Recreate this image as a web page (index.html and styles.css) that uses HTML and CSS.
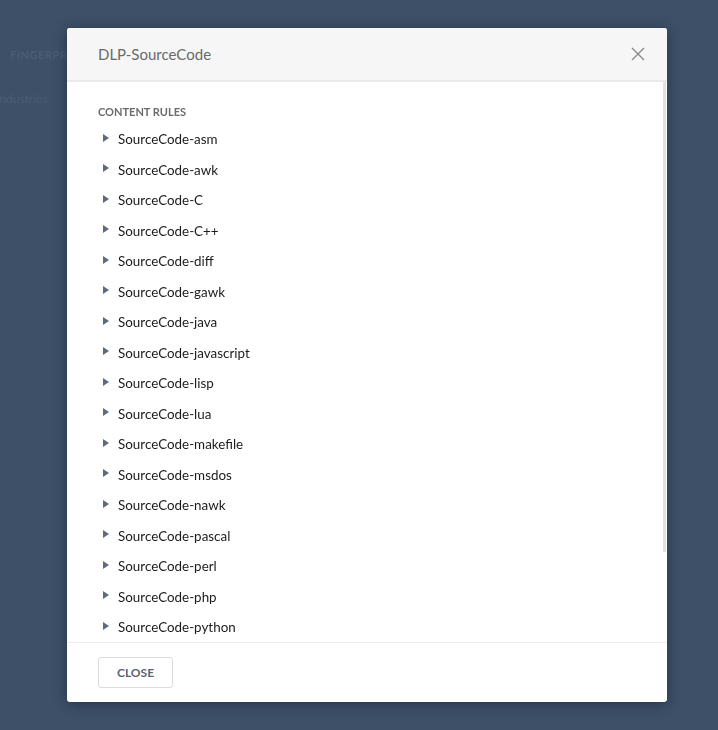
FILE: index.html
```html
<!DOCTYPE html>
<html lang="en">
<head>
    <meta charset="UTF-8">
    <title>DLP-SourceCode</title>
    <link rel="stylesheet" href="styles.css">
</head>
<body>
    <div class="page">
        <div class="page-tabs">FINGERPRINTS</div>
        <div class="page-row">Industries</div>
    </div>

    <div class="modal">
        <div class="modal-header">
            <h2>DLP-SourceCode</h2>
            <button class="close-x" aria-label="Close">
                <svg width="14" height="14" viewBox="0 0 14 14"><path d="M1 1L13 13M13 1L1 13" stroke="#8a8a8a" stroke-width="1.4" fill="none"/></svg>
            </button>
        </div>
        <div class="modal-body">
            <div class="section-label">Content Rules</div>
            <ul class="rules">
                <li>SourceCode-asm</li>
                <li>SourceCode-awk</li>
                <li>SourceCode-C</li>
                <li>SourceCode-C++</li>
                <li>SourceCode-diff</li>
                <li>SourceCode-gawk</li>
                <li>SourceCode-java</li>
                <li>SourceCode-javascript</li>
                <li>SourceCode-lisp</li>
                <li>SourceCode-lua</li>
                <li>SourceCode-makefile</li>
                <li>SourceCode-msdos</li>
                <li>SourceCode-nawk</li>
                <li>SourceCode-pascal</li>
                <li>SourceCode-perl</li>
                <li>SourceCode-php</li>
                <li>SourceCode-python</li>
            </ul>
        </div>
        <div class="scroll-thumb"></div>
        <div class="modal-footer">
            <button class="btn-close">Close</button>
        </div>
    </div>
</body>
</html>
```
FILE: styles.css
```css
body {
    margin: 0;
    background: #3d5068;
    font-family: Lato, "Open Sans", sans-serif;
    height: 730px;
    overflow: hidden;
}

.page {
    padding: 48px 0 0 10px;
    color: #4a5d74;
    font-size: 11px;
}
.page-tabs {
    font-weight: bold;
    letter-spacing: 0.5px;
}
.page-row {
    margin: 30px 0 0 -14px;
    font-size: 12px;
}

.modal {
    position: fixed;
    left: 67px;
    top: 28px;
    width: 600px;
    height: 674px;
    background: #fff;
    border-radius: 3px;
    box-shadow: 0 2px 14px rgba(10, 20, 35, 0.45);
    display: flex;
    flex-direction: column;
    overflow: hidden;
}

.modal-header {
    height: 52px;
    flex: none;
    background: #f6f6f6;
    border-bottom: 2px solid #e9e9e9;
    display: flex;
    align-items: center;
    justify-content: space-between;
    padding: 0 22px 0 31px;
}
.modal-header h2 {
    margin: 0;
    font-size: 15px;
    font-weight: normal;
    color: #6a6a6a;
}
.close-x {
    background: none;
    border: none;
    padding: 0;
    width: 14px;
    height: 14px;
    cursor: pointer;
}

.modal-body {
    flex: 1;
    overflow-y: auto;
    scrollbar-width: none;
    padding: 23px 30px 40px 31px;
}
.modal-body::-webkit-scrollbar {
    display: none;
}

/* drawn scrollbar thumb, sits over the body's right edge */
.scroll-thumb {
    position: absolute;
    right: 1px;
    top: 54px;
    width: 3px;
    height: 470px;
    background: #e0e0e0;
}

.section-label {
    font-size: 11px;
    line-height: 14px;
    font-weight: bold;
    text-transform: uppercase;
    color: #6b6b6b;
    margin-bottom: 5px;
}

.rules {
    list-style: none;
    margin: 0;
    padding: 0;
}
.rules li {
    height: 30.5px;
    display: flex;
    align-items: center;
    font-size: 13.4px;
    color: #1b1b1b;
}
.rules li::before {
    content: "";
    width: 0;
    height: 0;
    border-top: 4.5px solid transparent;
    border-bottom: 4.5px solid transparent;
    border-left: 6px solid #5c6b7c;
    margin: -3px 9px 0 5px;
}

.modal-footer {
    flex: none;
    height: 60px;
    border-top: 1px solid #ececec;
    padding: 14px 0 0 31px;
    box-sizing: border-box;
}
.btn-close {
    padding: 0 18px;
    height: 31px;
    background: #fff;
    border: 1px solid #dcdcdc;
    border-radius: 3px;
    font-family: Lato, "Open Sans", sans-serif;
    font-size: 12px;
    font-weight: bold;
    text-transform: uppercase;
    color: #5a6472;
    cursor: pointer;
}
```
